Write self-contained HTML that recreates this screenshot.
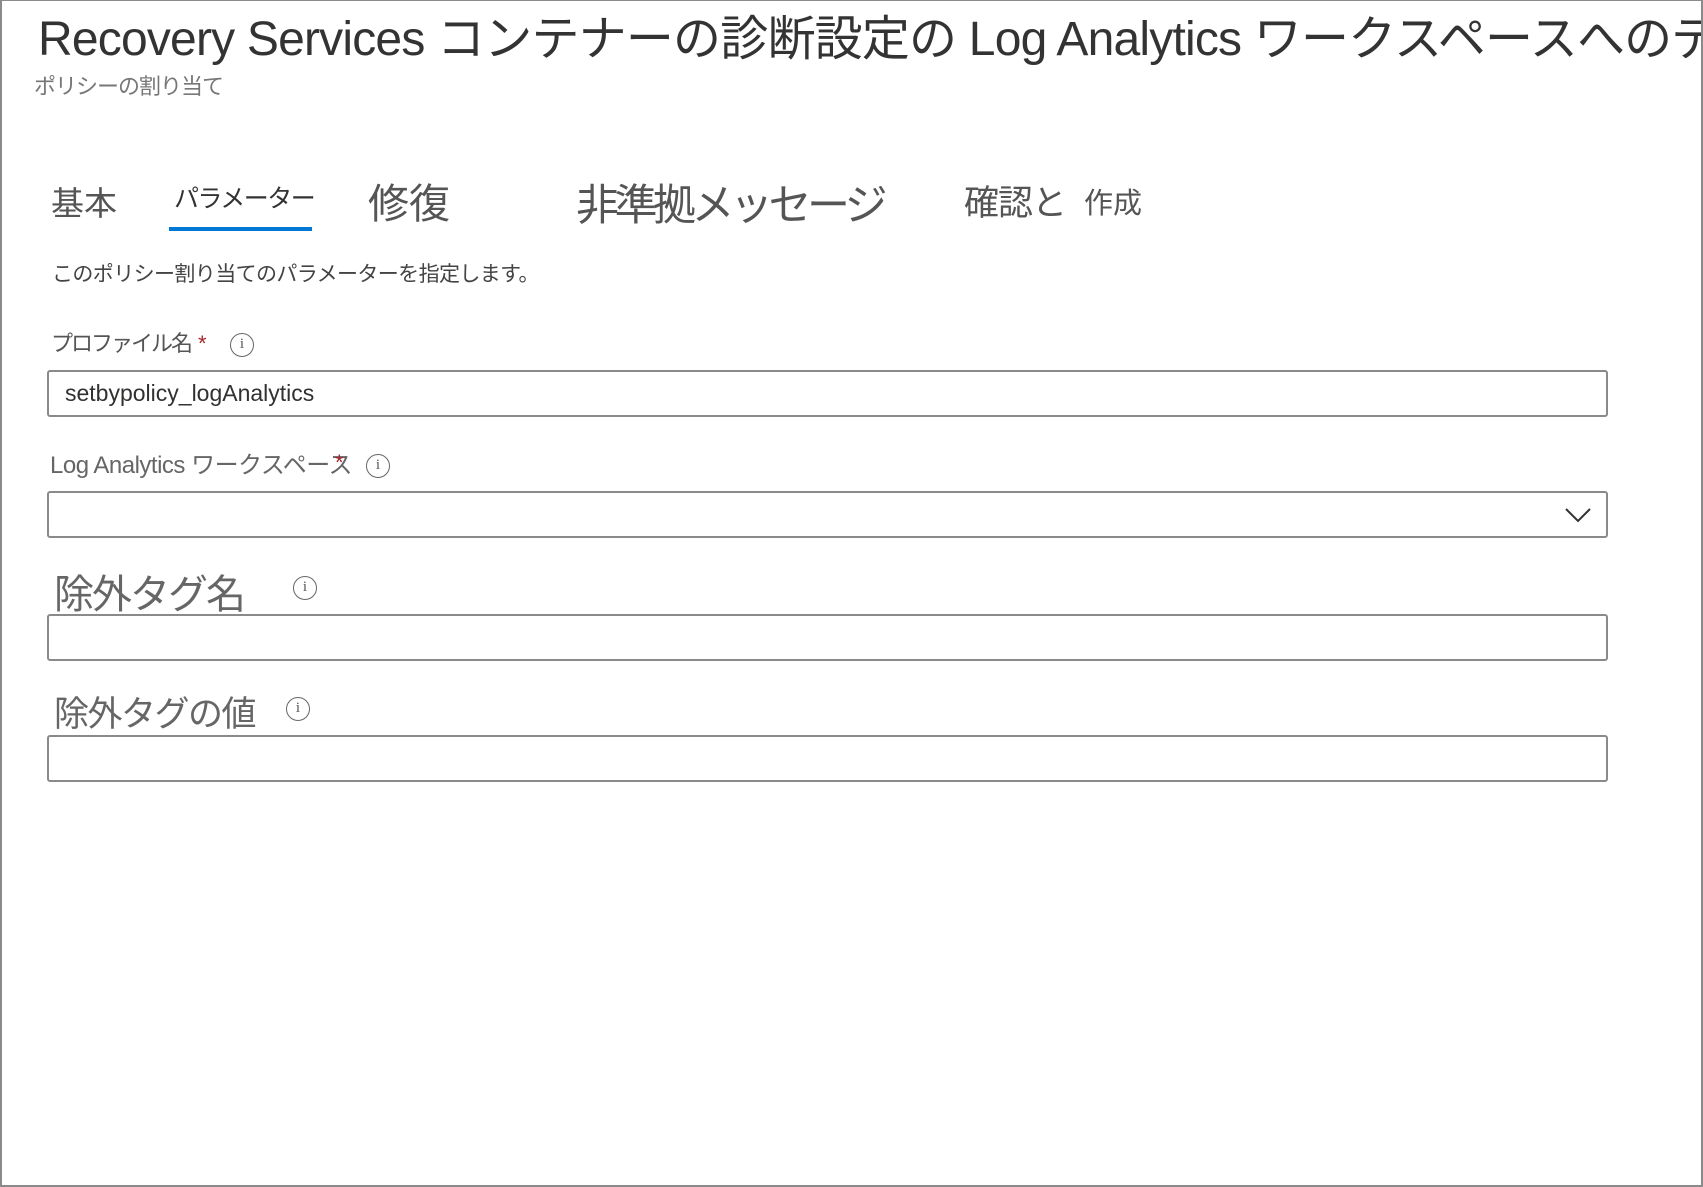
<!DOCTYPE html>
<html><head><meta charset="utf-8"><style>
*{margin:0;padding:0;box-sizing:border-box}
body{width:1703px;height:1187px;background:#fff;position:relative;overflow:hidden;font-family:"Liberation Sans","Noto Sans CJK JP",sans-serif;color:#555}
.frame{position:absolute;left:0;top:0;width:1703px;height:1187px;border:2px solid #8a8a8a;border-top:1px solid #8a8a8a}
.t{position:absolute;white-space:nowrap;line-height:1}
.box{position:absolute;left:47px;width:1561px;height:47px;border:2px solid #8a8a8a;border-radius:3px;background:#fff}
.info{position:absolute;width:24px;height:24px;border:1.5px solid #666;border-radius:50%;font-size:15px;text-align:center;line-height:21px;color:#555;font-family:"Liberation Serif",serif}
.clip{position:absolute;left:0;top:0;width:1701px;height:100px;overflow:hidden}
</style></head><body>
<div class="frame"></div>
<div class="clip"><div class="t" style="left:38px;top:16px;font-size:48px;color:#333;letter-spacing:-0.8px">Recovery Services コンテナーの診断設定の Log Analytics ワークスペースへのデプロイ</div></div>
<div class="t" style="left:34px;top:76px;font-size:22px;color:#777;letter-spacing:-1px">ポリシーの割り当て</div>

<div class="t" style="left:51px;top:187px;font-size:33px;color:#555">基本</div>
<div class="t" style="left:174px;top:187px;font-size:25px;color:#333;letter-spacing:-1.5px">パラメーター</div>
<div style="position:absolute;left:169px;top:227px;width:143px;height:4px;background:#0078d4"></div>
<div class="t" style="left:368px;top:184px;font-size:41px;color:#555">修復</div>
<div class="t" style="left:576px;top:185px;font-size:43px;color:#555;letter-spacing:-4.5px">非準拠メッセージ</div>
<div class="t" style="left:964px;top:186px;font-size:35px;color:#555;letter-spacing:-1px">確認と</div>
<div class="t" style="left:1084px;top:190px;font-size:29px;color:#555">作成</div>

<div class="t" style="left:52px;top:264px;font-size:21px;color:#444;letter-spacing:-0.6px">このポリシー割り当てのパラメーターを指定します。</div>

<div class="t" style="left:51px;top:333px;font-size:22px;color:#555;letter-spacing:-2px">プロファイル名</div>
<div class="t" style="left:198px;top:333px;font-size:22px;color:#a4262c">*</div>
<div class="info" style="left:230px;top:333px">i</div>
<div class="box" style="top:370px"></div>
<div class="t" style="left:65px;top:382px;font-size:23px;color:#323130">setbypolicy_logAnalytics</div>

<div class="t" style="left:50px;top:454px;font-size:24px;color:#666;letter-spacing:-0.5px">Log Analytics ワークスペース</div>
<div class="t" style="left:335px;top:452px;font-size:22px;color:#a4262c">*</div>
<div class="info" style="left:366px;top:454px">i</div>
<div class="box" style="top:491px"></div>
<svg style="position:absolute;left:1564px;top:506px" width="28" height="18" viewBox="0 0 28 18"><path d="M2 3 L14 15 L26 3" fill="none" stroke="#333" stroke-width="2"/></svg>

<div class="t" style="left:54px;top:575px;font-size:40px;color:#666;letter-spacing:-2px">除外タグ名</div>
<div class="info" style="left:293px;top:576px">i</div>
<div class="box" style="top:614px"></div>

<div class="t" style="left:54px;top:697px;font-size:35px;color:#666;letter-spacing:-1.5px">除外タグの値</div>
<div class="info" style="left:286px;top:697px">i</div>
<div class="box" style="top:735px"></div>
</body></html>
